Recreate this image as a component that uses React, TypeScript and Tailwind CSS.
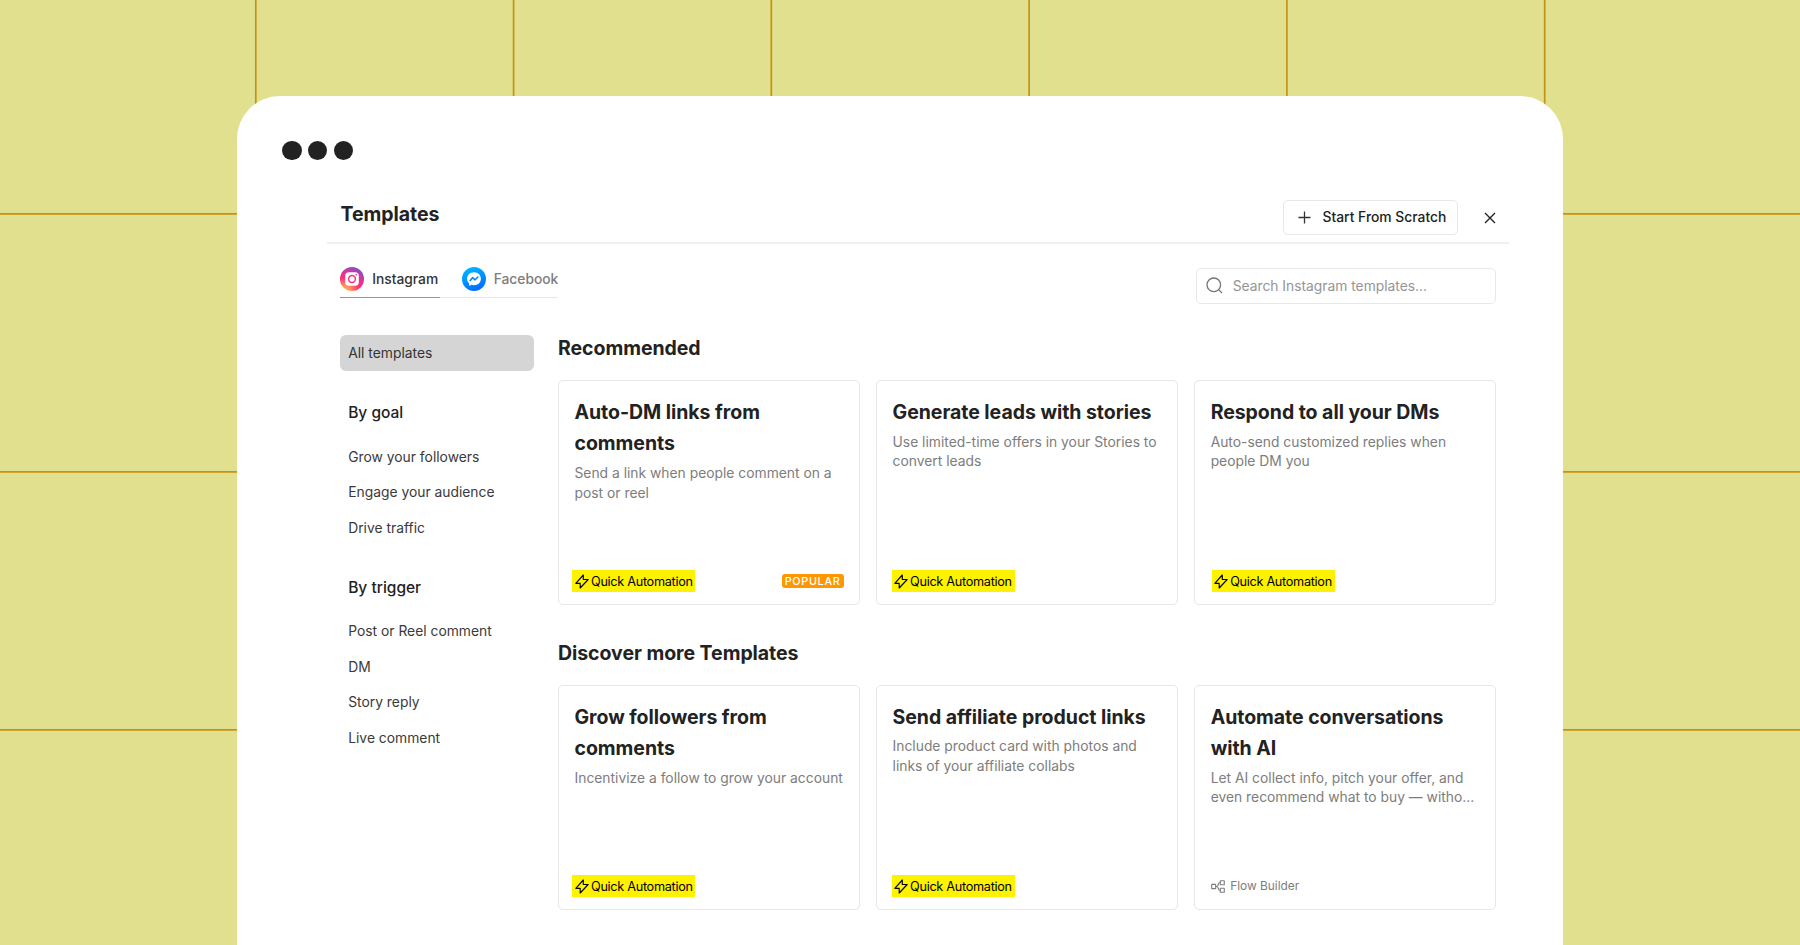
import React from 'react';
import clsx from 'clsx';

type Template = {
  title: string;
  text: string;
  flow?: boolean;
  popular?: boolean;
};

const recommended: Template[] = [
  { title: 'Auto-DM links from comments', text: 'Send a link when people comment on a post or reel', popular: true },
  { title: 'Generate leads with stories', text: 'Use limited-time offers in your Stories to convert leads' },
  { title: 'Respond to all your DMs', text: 'Auto-send customized replies when people DM you' },
];

const more: Template[] = [
  { title: 'Grow followers from comments', text: 'Incentivize a follow to grow your account' },
  { title: 'Send affiliate product links', text: 'Include product card with photos and links of your affiliate collabs' },
  { title: 'Automate conversations with AI', text: 'Let AI collect info, pitch your offer, and even recommend what to buy — witho...', flow: true },
];

const goals = ['Grow your followers', 'Engage your audience', 'Drive traffic'];
const triggers = ['Post or Reel comment', 'DM', 'Story reply', 'Live comment'];

const badgeShift = ['-ml-[2px]', '-ml-[1px]', 'ml-[1px]'];

const BackgroundGrid = () => (
  <svg className="absolute inset-0" width="1800" height="945" stroke="#c69214" strokeWidth="1.7" aria-hidden="true">
    {[255.8, 513.6, 771.3, 1029.1, 1286.9, 1544.7].map((x) => (
      <line key={x} x1={x} x2={x} y1="0" y2="945" />
    ))}
    {[213.9, 471.8, 729.8].map((y) => (
      <line key={y} x1="0" x2="1800" y1={y} y2={y} />
    ))}
  </svg>
);

const InstagramIcon = () => (
  <svg width="24" height="24" viewBox="0 0 24 24" fill="none">
    <defs>
      <radialGradient id="ig" cx="0.22" cy="1.02" r="1.05">
        <stop offset="0" stopColor="#ffc14d" />
        <stop offset="0.25" stopColor="#ff8a5c" />
        <stop offset="0.55" stopColor="#ff2f78" />
        <stop offset="0.8" stopColor="#d9359a" />
        <stop offset="1" stopColor="#8a4bc4" />
      </radialGradient>
    </defs>
    <circle cx="12" cy="12" r="12" fill="url(#ig)" />
    <rect x="5.2" y="5.2" width="13.6" height="13.6" rx="3.6" fill="#fff" />
    <circle cx="12" cy="12" r="3.4" stroke="#f5347f" strokeWidth="1.5" />
    <circle cx="16.2" cy="7.8" r="0.8" fill="#d9359a" />
  </svg>
);

const MessengerIcon = () => (
  <svg width="24" height="24" viewBox="0 0 24 24" fill="none">
    <defs>
      <linearGradient id="ms" x1="0.3" y1="0" x2="0.7" y2="1">
        <stop offset="0" stopColor="#00b8ff" />
        <stop offset="1" stopColor="#0068ff" />
      </linearGradient>
    </defs>
    <circle cx="12" cy="12" r="12" fill="url(#ms)" />
    <path d="M12 5.2c-3.9 0-6.9 2.8-6.9 6.5 0 2 .8 3.6 2.1 4.8v2.4l2.2-1.1c.8.2 1.7.4 2.6.4 3.9 0 6.9-2.8 6.9-6.5S15.9 5.2 12 5.2z" fill="#fff" />
    <path d="M8.2 13.6l2.4-2.9 2.5 2.1 2.7-2.8" stroke="#0a84ff" strokeWidth="1.6" strokeLinejoin="round" strokeLinecap="round" />
  </svg>
);

const BoltIcon = () => (
  <svg className="shrink-0" width="14" height="15" viewBox="0 0 14 15" fill="none" stroke="#000" strokeWidth="1.15" strokeLinejoin="round">
    <path d="M8.3 1v4.5h4.9L5.2 14V9.3H.8z" />
  </svg>
);

const FlowIcon = () => (
  <svg className="shrink-0" width="14" height="13" viewBox="0 0 14 13" fill="none" stroke="#7d7d7d" strokeWidth="1.1">
    <rect x="0.7" y="4.4" width="4" height="4.2" rx="0.3" />
    <rect x="9.3" y="0.8" width="4" height="4" rx="0.3" />
    <rect x="9.3" y="8.2" width="4" height="4" rx="0.3" />
    <path d="M4.7 6.5h1.2M9.3 2.8H8.4C7.3 2.8 7.3 6.5 5.9 6.5M9.3 10.2H8.4C7.3 10.2 7.3 6.5 5.9 6.5" />
  </svg>
);

const SectionTitle: React.FC<{ children: string }> = ({ children }) => (
  <h2 className="text-[19.5px] leading-[26.6px] font-bold tracking-[-0.05px] text-[#222]">{children}</h2>
);

const TemplateCard: React.FC<{ item: Template; index: number }> = ({ item, index }) => (
  <article className="flex h-[225.3px] flex-col rounded-[5px] border border-[#e6e6e6] px-[15.5px] pb-3 pt-4">
    <h3 className="text-[19.5px] leading-[31.3px] font-bold tracking-[-0.04px] text-[#222]">{item.title}</h3>
    <p className="mt-[4.3px] -mr-2 text-[13.85px] leading-[19.8px] text-[#7d7d7d]">{item.text}</p>
    <div className="mt-auto flex h-[22px] items-center justify-between">
      {item.flow ? (
        <span className="flex items-center gap-[5.5px] text-[11.9px] text-[#7d7d7d]">
          <FlowIcon />
          Flow Builder
        </span>
      ) : (
        <span
          className={clsx(
            'flex h-[22px] w-[123px] items-center gap-[2px] whitespace-nowrap bg-[#fff200] pl-[2.5px] text-[12.7px] tracking-[-0.3px] text-black',
            badgeShift[index],
          )}
        >
          <BoltIcon />
          Quick Automation
        </span>
      )}
      {item.popular && (
        <span className="flex h-[14px] w-[62px] items-center justify-center rounded-[3px] bg-[#ff9800] pt-px text-[10.8px] font-medium tracking-[0.7px] text-white">
          POPULAR
        </span>
      )}
    </div>
  </article>
);

const NavGroup: React.FC<{ title: string; items: string[] }> = ({ title, items }) => (
  <div>
    <h4 className="text-[15.5px] leading-[24px] font-medium text-[#222]">{title}</h4>
    <ul className="mt-[13.8px]">
      {items.map((item) => (
        <li key={item} className="flex h-[35.6px] items-center text-[13.85px] text-[#3a3a3a]">
          {item}
        </li>
      ))}
    </ul>
  </div>
);

export default function App() {
  return (
    <div className="relative h-[945px] w-[1800px] overflow-hidden bg-[#e1e08f] pt-24 font-['Inter',sans-serif]">
      <BackgroundGrid />
      <main className="relative mx-auto h-[900px] w-[1326px] rounded-[43px] bg-white pt-[44.8px]">
        <div className="ml-[45px] flex gap-[6.3px]">
          <span className="size-[19.5px] rounded-full bg-[#222]" />
          <span className="size-[19.5px] rounded-full bg-[#222]" />
          <span className="size-[19.5px] rounded-full bg-[#222]" />
        </div>

        <div className="ml-[89.5px] mt-[39.7px] w-[1182px]">
          <header className="flex h-[43.8px] justify-between border-b-2 border-[#f0f0f0] pl-[14px] pr-[12.5px]">
            <h1 className="text-[19.5px] leading-[28px] font-bold tracking-[-0.05px] text-[#222]">Templates</h1>
            <div className="flex items-start">
              <button className="flex h-[35px] w-[175px] items-center gap-3 rounded-[5px] border border-[#e8e8e8] pl-[14px] text-[13.85px] font-medium whitespace-nowrap text-[#222]">
                <svg width="13" height="13" viewBox="0 0 13 13" stroke="#333" strokeWidth="1.3">
                  <path d="M6.5 0.5v12M0.5 6.5h12" />
                </svg>
                Start From Scratch
              </button>
              <svg className="ml-[26.5px] mt-[11.7px]" width="12" height="12" viewBox="0 0 12 12" stroke="#222" strokeWidth="1.4">
                <path d="M1 1l10 10M11 1L1 11" />
              </svg>
            </div>
          </header>

          <div className="flex justify-between pl-[13.7px] pr-[12.8px] pt-[23.2px]">
            <div className="flex h-[31px] text-[13.8px] font-medium">
              <div className="flex w-[100px] items-start gap-2 border-b border-[#5a9ef5] leading-[24.6px] text-[#333]">
                <InstagramIcon />
                Instagram
              </div>
              <div className="flex items-start gap-2 border-b border-[#e6e6e6] pl-[21.5px] leading-[24.6px] text-[#7d7d7d]">
                <MessengerIcon />
                Facebook
              </div>
            </div>
            <label className="mt-[1px] flex h-9 w-[300px] items-center gap-[10px] rounded-[5px] border border-[#e8e8e8] pl-[9px] text-[13.8px] text-[#959595]">
              <svg width="17" height="17" viewBox="0 0 17 17" fill="none" stroke="#757575" strokeWidth="1.3">
                <circle cx="7.8" cy="7.8" r="6.8" />
                <path d="M12.6 12.6L16 16" />
              </svg>
              Search Instagram templates...
            </label>
          </div>

          <div className="flex pl-[13.7px] pr-[12.3px] pt-[31px]">
            <nav className="w-[217.8px]">
              <div className="flex h-9 w-[194px] items-center rounded-[6px] bg-[#d5d5d5] pl-2 pt-px text-[13.85px] text-[#333]">All templates</div>
              <div className="flex flex-col gap-[29.9px] pl-2 pt-[30.4px]">
                <NavGroup title="By goal" items={goals} />
                <NavGroup title="By trigger" items={triggers} />
              </div>
            </nav>
            <div className="flex-1">
              <SectionTitle>Recommended</SectionTitle>
              <div className="mt-[18.4px] grid grid-cols-3 gap-4">
                {recommended.map((item, i) => (
                  <TemplateCard key={item.title} item={item} index={i} />
                ))}
              </div>
              <div className="h-[34.9px]" />
              <SectionTitle>Discover more Templates</SectionTitle>
              <div className="mt-[18px] grid grid-cols-3 gap-4">
                {more.map((item, i) => (
                  <TemplateCard key={item.title} item={item} index={i} />
                ))}
              </div>
            </div>
          </div>
        </div>
      </main>
    </div>
  );
}
